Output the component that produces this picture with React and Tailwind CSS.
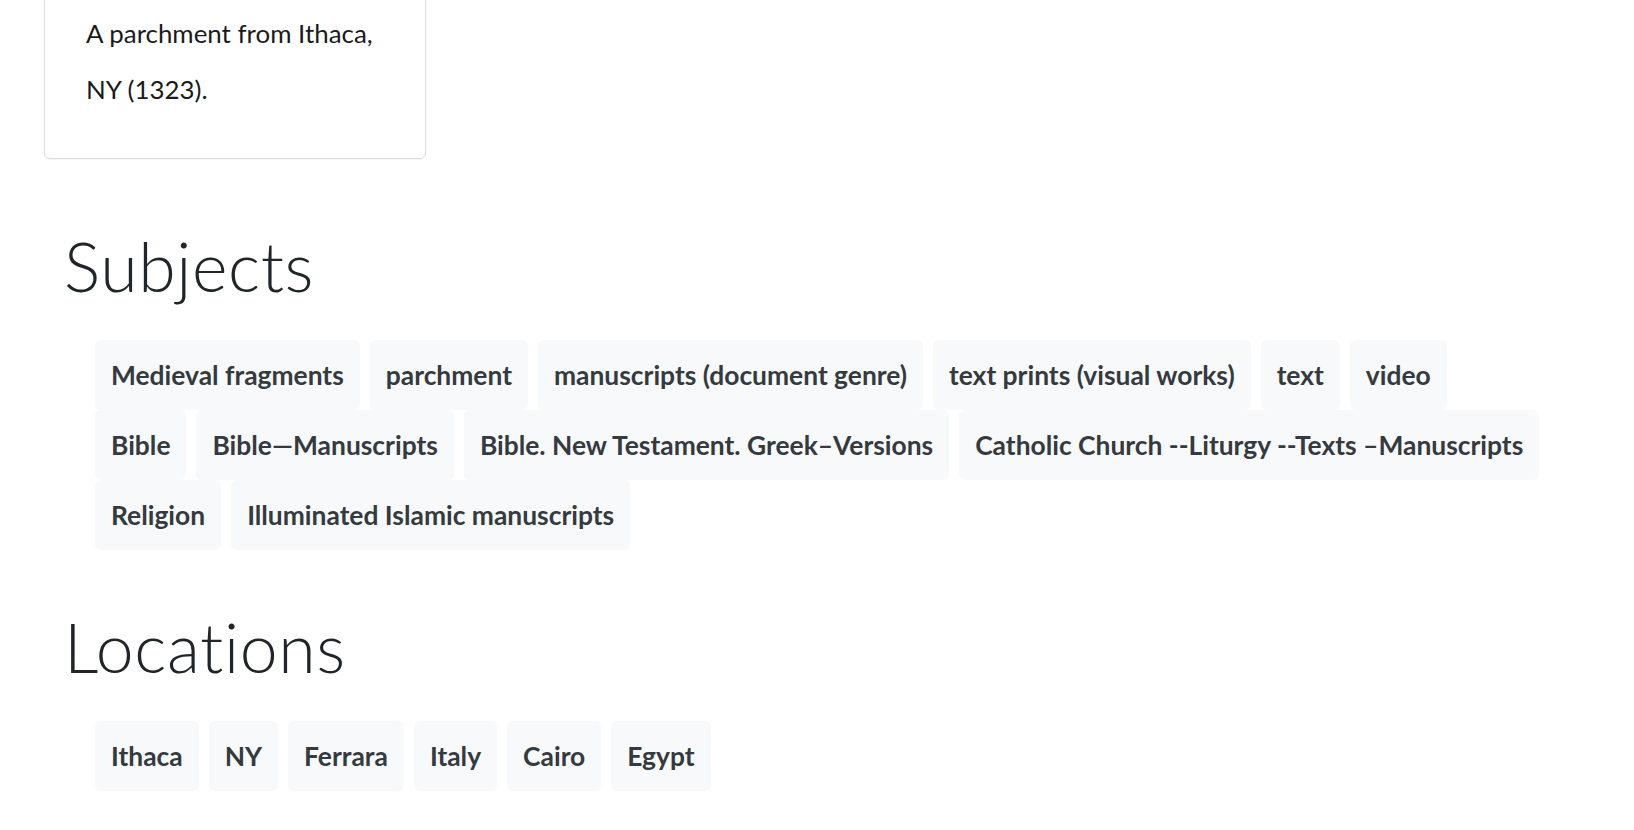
import React from 'react';

const subjects = [
  'Medieval fragments',
  'parchment',
  'manuscripts (document genre)',
  'text prints (visual works)',
  'text',
  'video',
  'Bible',
  'Bible—Manuscripts',
  'Bible. New Testament. Greek–Versions',
  'Catholic Church --Liturgy --Texts –Manuscripts',
  'Religion',
  'Illuminated Islamic manuscripts',
];

const locations = ['Ithaca', 'NY', 'Ferrara', 'Italy', 'Cairo', 'Egypt'];

function Tag({ label }) {
  return (
    <li className="h-[70px] flex items-center px-4 rounded-md bg-[#f8f9fa] text-[#343a40] text-[26.4px] font-bold leading-[32px] whitespace-nowrap">
      {label}
    </li>
  );
}

function TagSection({ title, items, className }) {
  return (
    <section className={className}>
      <h2 className="text-[68px] font-light tracking-[0.6px] leading-[82px] text-[#212529]">{title}</h2>
      <ul className="mt-[33px] ml-[31px] w-[1451px] flex flex-wrap gap-x-[10px]">
        {items.map((item) => (
          <Tag key={item} label={item} />
        ))}
      </ul>
    </section>
  );
}

export default function App() {
  return (
    <div className="min-h-screen bg-white font-['Lato',sans-serif] overflow-hidden">
      {/* Description card, scrolled partly out of view */}
      <div className="pl-[44px]">
        <div className="-mt-[36px] w-[382px] border border-[#dadcdf] rounded-md pt-[40px] pb-[41px] px-[41px] shadow-[0_1px_1px_rgba(0,0,0,0.04)]">
          <p className="text-[25.9px] leading-[56px] text-[#1b1b1b]">A parchment from Ithaca, NY (1323).</p>
        </div>
      </div>

      <div className="pl-[64px]">
        <TagSection title="Subjects" items={subjects} className="mt-[66px]" />
        <TagSection title="Locations" items={locations} className="mt-[56px] pb-10" />
      </div>
    </div>
  );
}
